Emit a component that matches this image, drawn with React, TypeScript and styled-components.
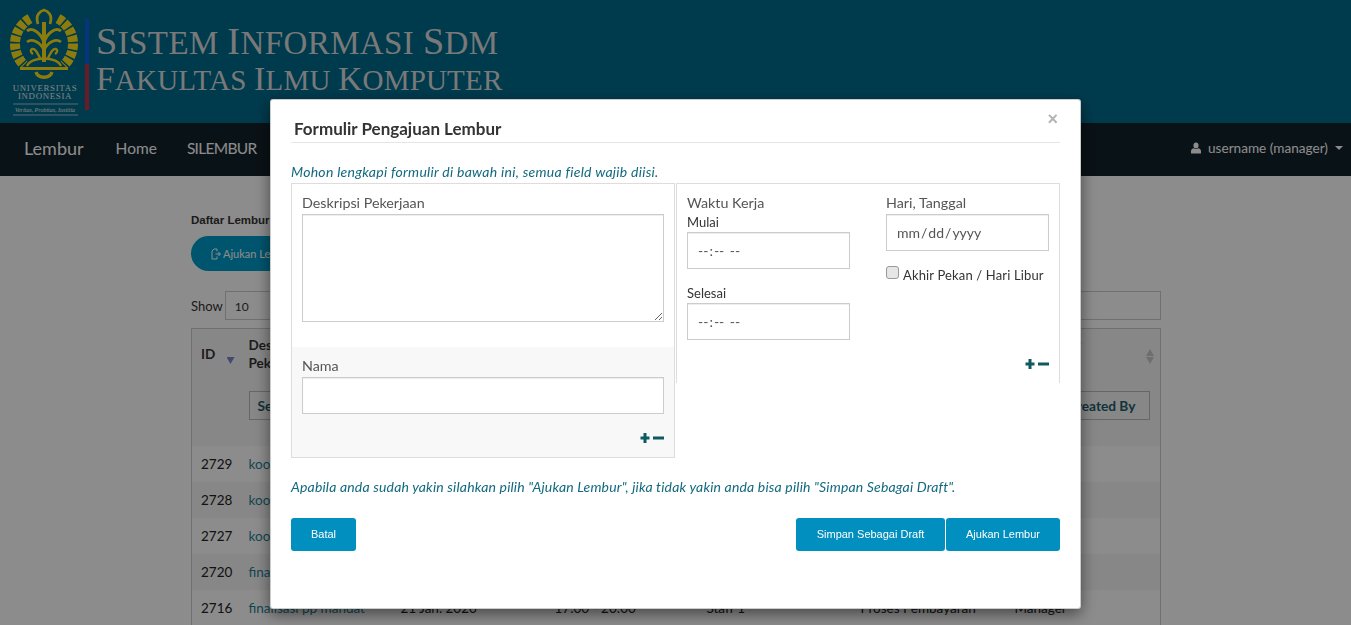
import React from "react";
import styled, { createGlobalStyle } from "styled-components";

const GlobalStyle = createGlobalStyle`
  html, body {
    margin: 0;
    padding: 0;
    height: 100%;
    overflow: hidden;
    background: #fff;
  }
  * { box-sizing: border-box; }
  body {
    font-family: "Lato", "Open Sans", sans-serif;
    font-size: 14px;
    color: #333;
  }
`;

const TopBanner = styled.header`
  height: 123px;
  background: #006b8c;
  display: flex;
  align-items: flex-start;
  padding: 8px 0 0 8px;
`;

const LogoSvg = styled.svg`
  width: 76px;
  height: 110px;
  flex: none;
`;

const ColorBar = styled.div`
  width: 4px;
  height: 91px;
  margin: 11px 0 0 1px;
  flex: none;
  background: linear-gradient(to bottom, #1160e0 0 50%, #c2314c 50% 100%);
`;

const BannerTitle = styled.div`
  margin: 16px 0 0 7px;
  font-family: "Liberation Serif", serif;
  text-transform: uppercase;
  color: #ddd;
  white-space: nowrap;
`;

const TitleLine = styled.div<{ $size: number; $track: number }>`
  font-size: ${(p) => p.$size}px;
  letter-spacing: ${(p) => p.$track}px;
  line-height: 35px;
`;

const BigCap = styled.span`
  font-size: 1.16em;
`;

const NavBar = styled.nav`
  height: 53px;
  background: #12212a;
  display: flex;
  align-items: center;
  padding: 0 8px 3px 24px;
  color: #fff;
`;

const Brand = styled.span`
  font-size: 18px;
  margin-right: 32px;
`;

const NavLink = styled.a<{ $track?: number }>`
  font-size: 15.500px;
  letter-spacing: ${(p) => p.$track ?? 0}px;
  margin-right: 30px;
`;

const UserMenu = styled.div`
  margin-left: auto;
  display: flex;
  align-items: center;
  gap: 7px;
  font-size: 13.600px;
`;

const Caret = styled.span`
  width: 0;
  height: 0;
  border-left: 4px solid transparent;
  border-right: 4px solid transparent;
  border-top: 4px solid #fff;
`;

const Content = styled.main`
  width: 970px;
  margin: 0 0 0 191px;
  padding-top: 37px;
`;

const ListTitle = styled.h4`
  margin: 0 0 9px;
  font: bold 11.500px/14px "Liberation Sans", sans-serif;
`;

const PillButton = styled.button`
  height: 35px;
  width: 180px;
  border: 0;
  border-radius: 18px;
  background: #009bc9;
  color: #fff;
  font: 11px "Lato", sans-serif;
  display: flex;
  align-items: center;
  gap: 2px;
  padding-left: 20px;
`;

const ToolRow = styled.div`
  display: flex;
  align-items: center;
  gap: 2px;
  margin: 20px 0 8px;
  font-size: 13px;
`;

const ToolBox = styled.div<{ $grow?: boolean }>`
  height: 29px;
  border: 1px solid #ccc;
  padding: 7px 9px;
  font-size: 12px;
  flex: ${(p) => (p.$grow ? 1 : "none")};
  width: ${(p) => (p.$grow ? "auto" : "70px")};
`;

const TableShell = styled.table`
  width: 969px;
  border-collapse: collapse;
  table-layout: fixed;
  border: 1px solid #ccc;
`;

const HeadCell = styled.th<{ $w: number }>`
  width: ${(p) => p.$w}px;
  height: 117px;
  padding: 7px 10px 0 9px;
  vertical-align: top;
  text-align: left;
  position: relative;
  background: #f6f6f6;
  font-size: 13.500px;
  line-height: 18px;
`;

const HeadTitle = styled.div<{ $single?: boolean }>`
  height: 55px;
  max-width: 100px;
  padding-top: ${(p) => (p.$single ? "9px" : "0")};
`;

const FilterBox = styled.div`
  height: 29px;
  border: 1px solid #bbb;
  padding: 5px 8px;
  font-weight: bold;
  font-size: 13.700px;
  color: #1f5d6a;
  white-space: nowrap;
  overflow: hidden;
`;

const SortMark = styled.span<{ $active?: boolean }>`
  position: absolute;
  right: ${(p) => (p.$active ? "5px" : "6px")};
  top: ${(p) => (p.$active ? "28px" : "20px")};
  width: 8px;
  height: ${(p) => (p.$active ? "7px" : "15px")};
  background: ${(p) => (p.$active ? "#8083cc" : "#c8c8c8")};
  clip-path: ${(p) =>
    p.$active
      ? "polygon(0 0, 100% 0, 50% 100%)"
      : "polygon(50% 0, 100% 46%, 0 46%, 0 54%, 100% 54%, 50% 100%, 0 54%, 0 46%)"};
`;

const BodyRow = styled.tr<{ $odd: boolean }>`
  height: 36px;
  background: ${(p) => (p.$odd ? "#fff" : "#f6f6f6")};
`;

const BodyCell = styled.td<{ $link?: boolean }>`
  padding: 1px 10px 0 9px;
  font-size: 13.500px;
  white-space: nowrap;
  color: ${(p) => (p.$link ? "#1f7f93" : "#222")};
`;

const Backdrop = styled.div`
  position: fixed;
  inset: 0;
  background: rgba(0, 0, 0, 0.45);
`;

const Modal = styled.section`
  position: fixed;
  left: 270px;
  top: 99px;
  width: 811px;
  height: 510px;
  background: #fff;
  border: 1px solid rgba(0, 0, 0, 0.2);
  border-radius: 3px;
  box-shadow: 0 5px 15px rgba(0, 0, 0, 0.5);
  padding: 0 20px;
`;

const CloseMark = styled.span`
  position: absolute;
  right: 22px;
  top: 9px;
  font: bold 18px/20px "Liberation Sans", sans-serif;
  color: #b4b4b4;
`;

const ModalTitle = styled.h4`
  margin: 0;
  height: 43px;
  padding: 19px 0 0 3px;
  border-bottom: 1px solid #e5e5e5;
  font-size: 17px;
  line-height: 19px;
  font-weight: bold;
  color: #333;
`;

const Note = styled.p<{ $gap: number; $track: number }>`
  margin: ${(p) => p.$gap}px 0 0;
  font-style: italic;
  font-size: 14px;
  line-height: 16px;
  letter-spacing: ${(p) => p.$track}px;
  color: #12697f;
`;

const FormGrid = styled.div`
  display: grid;
  grid-template-columns: 384px 385px;
  align-items: start;
  margin-top: 3px;
`;

const LeftPanel = styled.div`
  border: 1px solid #ddd;
`;

const DescBlock = styled.div`
  padding: 10px 10px 25px;
  height: 163px;
`;

const NameBlock = styled.div`
  background: #f8f8f8;
  padding: 10px 10px 0;
  height: 110px;
`;

const RightPanel = styled.div`
  height: 200px;
  border: 1px solid #ddd;
  border-bottom: 0;
  padding: 10px 10px 0;
  margin-left: 1px;
  display: grid;
  grid-template-columns: 163px 163px;
  justify-content: space-between;
  align-content: start;
`;

const FieldLabel = styled.label`
  display: block;
  font-size: 14.300px;
  line-height: 18px;
  height: 20px;
  color: #555;
`;

const SmallLabel = styled.label`
  display: block;
  font-size: 13px;
  line-height: 16px;
  height: 18px;
  color: #333;
`;

const Area = styled.textarea`
  display: block;
  width: 100%;
  height: 108px;
  border: 1px solid #ccc;
  box-shadow: inset 0 1px 1px rgba(0, 0, 0, 0.075);
  background: #fff;
`;

const TextField = styled.input<{ $gap?: number }>`
  display: block;
  width: 100%;
  height: 37px;
  border: 1px solid #ccc;
  box-shadow: inset 0 1px 1px rgba(0, 0, 0, 0.075);
  background: #fff;
  padding: 6px 9px;
  font-family: "Lato", sans-serif;
  font-size: 14px;
  color: #555;
  margin-bottom: ${(p) => p.$gap ?? 0}px;
  &::-webkit-calendar-picker-indicator {
    display: none;
  }
`;

const CheckRow = styled.label`
  display: flex;
  align-items: flex-start;
  gap: 4px;
  margin-top: 15px;
  font-size: 13px;
  letter-spacing: 0.15px;
  line-height: 16px;
  color: #333;
  white-space: nowrap;
`;

const CheckText = styled.span`
  margin-top: 1px;
`;

const CheckBox = styled.input`
  appearance: none;
  margin: 0;
  width: 13px;
  height: 13px;
  flex: none;
  background: #e6e6e6;
  border: 1px solid #999;
  border-radius: 3px;
`;

const AddRemove = styled.div<{ $top: number }>`
  display: flex;
  justify-content: flex-end;
  align-items: center;
  gap: 2px;
  margin-top: ${(p) => p.$top}px;
`;

const RightAddRemove = styled(AddRemove)`
  grid-column: 1 / 3;
`;

const ActionRow = styled.div`
  display: flex;
  align-items: flex-start;
  gap: 1px;
  margin-top: 23px;
`;

const ActionButton = styled.button<{ $w: number; $push?: boolean }>`
  width: ${(p) => p.$w}px;
  height: 33px;
  padding: 0 0 2px;
  margin-left: ${(p) => (p.$push ? "auto" : "0")};
  border: 0;
  border-radius: 3px;
  background: #008fbe;
  color: #fff;
  font: 11px "Liberation Sans", sans-serif;
`;

// small plus and minus pair used under both form blocks
const PlusMinus = () => (
  <svg width="25" height="10" viewBox="0 0 25 10">
    <path d="M4.500 0h3v3.500h3v3h-3V10h-3V6.500h-3v-3h3z" fill="#0f5a60" />
    <rect x="14" y="3.500" width="11" height="3" fill="#0f5a60" />
  </svg>
);

const UserIcon = () => (
  <svg width="10" height="12" viewBox="0 0 11 12">
    <ellipse cx="5.500" cy="3.200" rx="2.800" ry="3.200" fill="#fff" />
    <path d="M0 12V9.200C0 7.700 1.500 6.600 3 6.300c1.500 1 3.500 1 5 0 1.500.3 3 1.400 3 2.900V12z" fill="#fff" />
  </svg>
);

const DocIcon = () => (
  <svg width="10" height="12" viewBox="0 0 10 12" fill="none" stroke="#fff" strokeWidth="1">
    <path d="M6 3.500V1H3L1 3v8h5V8.500" />
    <path d="M4.500 6H10M8 4v4" />
  </svg>
);

// university emblem, drawn by hand from the reference; the view box uses page pixels
const UniLogo = () => (
  <LogoSvg viewBox="8 8 76 110">
    <g fill="none" stroke="#ffe21a">
      <path d="M30 18.600A29 29 0 0 0 24 65" strokeWidth="10" strokeDasharray="6 1.600" />
      <path d="M58 18.600A29 29 0 0 1 64 65" strokeWidth="10" strokeDasharray="6 1.600" />
      <path d="M44 22V62" strokeWidth="4" />
      <path d="M38 24C35 15 40 11 44 10c4 1 9 5 6 14" strokeWidth="2.800" />
      <path d="M44 42C40 32 32 27 27 31M44 42C48 32 56 27 61 31" strokeWidth="3" />
      <path d="M44 50C40 42 32 38 27 42M44 50C48 42 56 38 61 42" strokeWidth="2.600" />
      <path d="M40 58C37 52 35 48 32 49c-2 1-1 4 1 5M48 58C51 52 53 48 56 49c2 1 1 4-1 5" strokeWidth="2.400" />
      <path d="M27 66C31 56 57 56 61 66" strokeWidth="2.400" />
      <path d="M20 68.500H68" strokeWidth="3" />
      <path d="M36 72C38 79 50 79 52 72" strokeWidth="3.400" />
    </g>
    <g fill="#eee" textAnchor="middle" fontFamily="'Liberation Serif', serif">
      <text x="45" y="91" fontSize="8.800" letterSpacing=".7">UNIVERSITAS</text>
      <text x="45" y="99" fontSize="8.800" letterSpacing=".7">INDONESIA</text>
      <text x="45" y="112" fontSize="6" fontStyle="italic">Veritas, Probitas, Iustitia</text>
    </g>
    <path d="M13 104H78M13 115H78" stroke="#eee" strokeWidth=".7" />
  </LogoSvg>
);

const TitleWords = ({ text }: { text: string }) => (
  <>
    {text.split(" ").map((word, i) => (
      <React.Fragment key={word}>
        {i > 0 && " "}
        <BigCap>{word[0]}</BigCap>
        {word.slice(1)}
      </React.Fragment>
    ))}
  </>
);

const columns = [
  { title: "ID", width: 48 },
  { title: "Deskripsi Pekerjaan", width: 152, filter: "Search Deskripsi" },
  { title: "", width: 154 },
  { title: "", width: 152 },
  { title: "", width: 154 },
  { title: "", width: 154 },
  { title: "Created By", width: 155, filter: "Search Created By" },
];

// only what shows around the dialog is filled in
const rows = [
  ["2729", "koordinasi"],
  ["2728", "koordinasi"],
  ["2727", "koordinasi"],
  ["2720", "finalisasi pp mandat"],
  ["2716", "finalisasi pp mandat", "21 Jan. 2020", "17:00 - 20:00", "Staff 1", "Proses Pembayaran", "Manager"],
];

const App = () => {
  return (
    <>
      <GlobalStyle />
      <TopBanner>
        <UniLogo />
        <ColorBar />
        <BannerTitle>
          <TitleLine $size={33} $track={0.4}>
            <TitleWords text="Sistem Informasi SDM" />
          </TitleLine>
          <TitleLine $size={29} $track={0.2}>
            <TitleWords text="Fakultas Ilmu Komputer" />
          </TitleLine>
        </BannerTitle>
      </TopBanner>
      <NavBar>
        <Brand>Lembur</Brand>
        <NavLink>Home</NavLink>
        <NavLink $track={-0.7}>SILEMBUR</NavLink>
        <UserMenu>
          <UserIcon />
          username (manager)
          <Caret />
        </UserMenu>
      </NavBar>

      <Content>
        <ListTitle>Daftar Lembur</ListTitle>
        <PillButton>
          <DocIcon />
          Ajukan Lembur
        </PillButton>
        <ToolRow>
          Show
          <ToolBox>10</ToolBox>
          <ToolBox $grow />
        </ToolRow>
        <TableShell>
          <thead>
            <tr>
              {columns.map((c, i) => (
                <HeadCell key={i} $w={c.width}>
                  <HeadTitle $single={i === 0}>{c.title}</HeadTitle>
                  {i > 0 && <FilterBox>{c.filter}</FilterBox>}
                  {(i === 0 || i === 6) && <SortMark $active={i === 0} />}
                </HeadCell>
              ))}
            </tr>
          </thead>
          <tbody>
            {rows.map((r, i) => (
              <BodyRow key={r[0]} $odd={i % 2 === 0}>
                {columns.map((_, j) => (
                  <BodyCell key={j} $link={j === 1}>
                    {r[j]}
                  </BodyCell>
                ))}
              </BodyRow>
            ))}
          </tbody>
        </TableShell>
      </Content>

      <Backdrop />
      <Modal>
        <CloseMark>×</CloseMark>
        <ModalTitle>Formulir Pengajuan Lembur</ModalTitle>
        <Note $gap={21} $track={0.27}>
          Mohon lengkapi formulir di bawah ini, semua field wajib diisi.
        </Note>
        <FormGrid>
          <LeftPanel>
            <DescBlock>
              <FieldLabel>Deskripsi Pekerjaan</FieldLabel>
              <Area />
            </DescBlock>
            <NameBlock>
              <FieldLabel>Nama</FieldLabel>
              <TextField type="text" />
              <AddRemove $top={19}>
                <PlusMinus />
              </AddRemove>
            </NameBlock>
          </LeftPanel>
          <RightPanel>
            <div>
              <FieldLabel>Waktu Kerja</FieldLabel>
              <SmallLabel>Mulai</SmallLabel>
              <TextField type="time" $gap={16} />
              <SmallLabel>Selesai</SmallLabel>
              <TextField type="time" />
            </div>
            <div>
              <FieldLabel>Hari, Tanggal</FieldLabel>
              <TextField type="date" />
              <CheckRow>
                <CheckBox type="checkbox" />
                <CheckText>Akhir Pekan / Hari Libur</CheckText>
              </CheckRow>
            </div>
            <RightAddRemove $top={19}>
              <PlusMinus />
            </RightAddRemove>
          </RightPanel>
        </FormGrid>
        <Note $gap={21} $track={0.17}>
          Apabila anda sudah yakin silahkan pilih "Ajukan Lembur", jika tidak yakin anda bisa pilih "Simpan Sebagai
          Draft".
        </Note>
        <ActionRow>
          <ActionButton $w={65}>Batal</ActionButton>
          <ActionButton $w={149} $push>
            Simpan Sebagai Draft
          </ActionButton>
          <ActionButton $w={114}>Ajukan Lembur</ActionButton>
        </ActionRow>
      </Modal>
    </>
  );
};

export default App;
